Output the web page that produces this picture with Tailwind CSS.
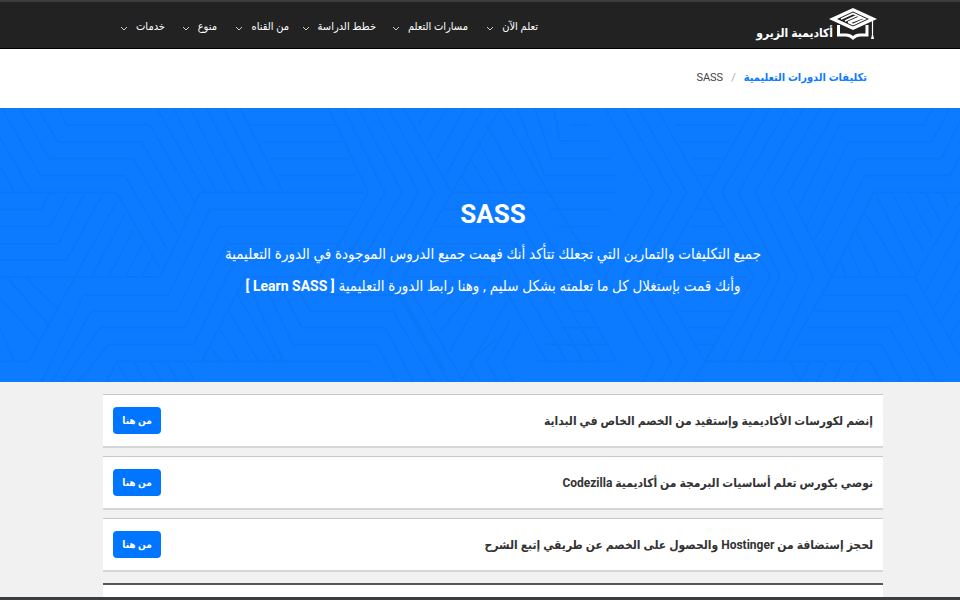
<!DOCTYPE html>
<html lang="ar" dir="rtl">
<head>
<meta charset="utf-8">
<meta name="viewport" content="width=device-width, initial-scale=1">
<title>SASS - أكاديمية الزيرو</title>
<script src="https://cdn.jsdelivr.net/npm/@tailwindcss/browser@4"></script>
</head>
<body class="flex min-h-screen flex-col bg-[#f1f1f1] font-[Roboto,'DejaVu_Sans_Condensed','DejaVu_Sans',sans-serif] text-[#333]">
<header class="border-t-2 border-b border-t-[#3b3d3e] border-b-black bg-[#222] pl-[26px]">
  <div class="mx-auto flex h-[46px] max-w-[780px] items-center justify-between">
    <a href="#" class="ms-[6px] flex items-center text-white" aria-label="أكاديمية الزيرو">
      <svg class="mb-[2px] h-8 w-12" viewBox="0 0 48 32" fill="none" aria-hidden="true">
        <path d="M24 0 48 11 24 22 0 11Z" fill="#fff"/>
        <path d="M24 3.500 40 11 24 18.500 8 11Z" fill="#222"/>
        <path d="M12 11 24 5.500 36 11 24 16.500 19 14.200M16 13 28 7.500M19 14.200 32 8.500M20 15 33 10" stroke="#fff" stroke-width="1.600"/>
        <path d="M9.500 17V27H17Q21 27 24 30Q27 27 31 27H38V17" stroke="#fff" stroke-width="3"/>
        <path d="M43.500 12V26" stroke="#fff" stroke-width="1.200"/>
        <path d="M43.500 24 42 31H45Z" fill="#fff"/>
      </svg>
      <span class="-ms-1 whitespace-nowrap pt-4 text-xs font-bold">أكاديمية الزيرو</span>
    </a>
    <nav class="me-[18px] grid grid-cols-[70px_92px_87px_72px_52px_44px] pt-1 text-[11px] text-white">
      <a href="#" class="flex items-center gap-2 whitespace-nowrap">تعلم الآن<svg class="mt-1 h-2 w-2 shrink-0" viewBox="0 0 8 8" fill="none" stroke="#ccc" aria-hidden="true"><path d="M1 2 4 5 7 2"/></svg></a>
      <a href="#" class="flex items-center gap-2 whitespace-nowrap">مسارات التعلم<svg class="mt-1 h-2 w-2 shrink-0" viewBox="0 0 8 8" fill="none" stroke="#ccc" aria-hidden="true"><path d="M1 2 4 5 7 2"/></svg></a>
      <a href="#" class="flex items-center gap-2 whitespace-nowrap">خطط الدراسة<svg class="mt-1 h-2 w-2 shrink-0" viewBox="0 0 8 8" fill="none" stroke="#ccc" aria-hidden="true"><path d="M1 2 4 5 7 2"/></svg></a>
      <a href="#" class="flex items-center gap-2 whitespace-nowrap">من القناه<svg class="mt-1 h-2 w-2 shrink-0" viewBox="0 0 8 8" fill="none" stroke="#ccc" aria-hidden="true"><path d="M1 2 4 5 7 2"/></svg></a>
      <a href="#" class="flex items-center gap-2 whitespace-nowrap">منوع<svg class="mt-1 h-2 w-2 shrink-0" viewBox="0 0 8 8" fill="none" stroke="#ccc" aria-hidden="true"><path d="M1 2 4 5 7 2"/></svg></a>
      <a href="#" class="flex items-center gap-2 whitespace-nowrap">خدمات<svg class="mt-1 h-2 w-2 shrink-0" viewBox="0 0 8 8" fill="none" stroke="#ccc" aria-hidden="true"><path d="M1 2 4 5 7 2"/></svg></a>
    </nav>
  </div>
</header>
<nav aria-label="مسار التنقل" class="bg-white pl-[26px]">
  <ol class="mx-auto flex h-[59px] max-w-[780px] items-center gap-2 px-4 text-[11px]">
    <li><a href="#" class="font-bold text-[#0d7bff]">تكليفات الدورات التعليمية</a></li>
    <li class="text-[#aaa]" aria-hidden="true">/</li>
    <li class="text-[#444]">SASS</li>
  </ol>
</nav>
<main class="flex grow flex-col">
  <section class="relative overflow-hidden bg-[#0d7bff] pl-[26px] text-white">
    <svg class="absolute inset-0 h-full w-full" viewBox="0 9 2880 822" preserveAspectRatio="xMidYMin slice" fill="none" stroke="#0c76f6" stroke-width="5" aria-hidden="true">
      <path d="M175 9 200 60H450L585 293M113 9 172 111H425L557 340M60 9 147 160H400L531 386M5 9 122 212H375L503 434M0 262H350L480 490M0 97 95 262M0 184 45 262M470 9 615 262M520 9 650 262M570 9 700 262M620 9 750 262M670 9 800 262M720 9 850 262M755 60H1010M785 111H1025M810 160H1050M835 212H1070"/>
      <path d="M0 313H125L150 262M0 365H150L205 262M0 415H175L255 262M0 465H200L310 262M0 516H480L600 262H1095M225 516 350 290M275 516 375 325M325 516 400 375M375 516 430 415M425 516 455 460M225 516 85 770H0M75 516 170 610M20 516 150 665M0 580 120 710M0 670 45 770"/>
      <path d="M125 830 250 570H505L630 313H1065M145 850 275 618H530L655 365H1040M175 850 300 668H555L680 415H1015M220 850 325 718H580L705 465H990M310 850 350 770H605L735 516H965M710 565 830 770M685 615 775 770M655 668 720 770M630 720 665 770M875 516 930 618H1180L1300 830M825 516 905 668H1155L1240 830M780 516 880 718H1130L1190 830M735 516 850 770H1110M350 770 385 830M400 770 435 830M450 770 485 830M500 770 535 830M550 770 585 830M605 770H850"/>
      <path d="M985 9 1105 262 960 516M1030 9 1155 262 1010 516M1075 9 1205 262 1060 516M1120 9 1255 262 1110 516M1165 9 1305 262 1160 516M1210 9 1355 262 1210 516M1255 60 1285 9M1280 111 1340 9M1310 160 1395 9M1335 212 1450 9M1355 262 1500 9M1385 212 1415 262M1410 160 1470 262M1435 111 1520 262M1460 60 1575 262M1355 262H1850M1500 9 1645 262 1800 516M1550 9 1635 212H1850M1605 9 1655 160H1830M1660 9 1680 108H1800M1710 60H1770"/>
      <path d="M1330 313H1595L1850 770M1305 365H1570L1800 770M1275 415H1550L1750 770M1250 465H1520L1700 770M1225 516H1495L1640 770M1650 313H1830M1675 365H1800M1705 415H1780M965 570H1205L1335 800M1165 516 1345 830M1210 516 1390 830M1335 570 1365 516M1300 630 1400 516M1320 680 1450 516M1350 740 1475 516M1520 590 1385 830M1490 700 1410 770 1440 830M1530 650 1460 770 1495 830M1560 680 1510 770 1540 830M1610 770H1850M1635 718H1825M1680 668H1800M1710 618H1770"/>
      <path transform="translate(280)" d="M1534 9 1680 262 1534 516M1589 9 1735 262 1589 516M1634 9 1780 262 1634 516M1689 9 1835 262 1689 516M1745 60H1930M1760 111H1910M1790 160H1885M1815 212H1860M1805 313H1860M1790 365H1890M1760 415H1915M1730 465H1940M1705 516H1960M1760 618H1925M1785 668H1900M1810 718H1870M1981 9 1835 262 1981 516 1835 770M2031 9 1885 262 2031 516 1885 770M2081 9 1935 262 2060 516 1935 770M2131 9 1985 262 2110 516 1985 770M2181 9 2035 262 2160 516 2040 770M2231 9 2085 262 2215 516 2070 770M1534 516 1680 770 1650 830M1589 516 1735 770 1700 830M1634 516 1780 770 1745 830M1689 516 1835 770 1800 830"/>
      <path transform="translate(1920)" d="M880 9 850 60H600L475 310M930 9 875 111H625L500 360M960 50 905 160H650L525 405M960 150 930 212H675L550 455M960 262H700L575 516M670 315 790 516M645 370 720 516M620 415 665 516M600 465 620 516M705 262 825 500M755 262 850 440M805 262 875 395M855 262 900 350M905 262 925 305M575 516H825L960 755M550 570H800L925 790M525 618H775L890 830M500 668H750L840 830M475 718H725L785 830M195 770H690L725 830M825 516 960 290M855 560 960 370M880 610 960 470M900 655 960 555M925 705 960 640M450 770 480 830 510 770M530 830 560 770M580 830 610 770M630 830 660 770"/>
    </svg>
    <div class="relative mx-auto flex min-h-[274px] max-w-[780px] flex-col items-center pt-[86px] text-center">
      <h1 class="text-[26px] leading-10 font-bold">SASS</h1>
      <p class="mt-1 text-[15px] leading-8">جميع التكليفات والتمارين التي تجعلك تتأكد أنك فهمت جميع الدروس الموجودة في الدورة التعليمية<br>وأنك قمت بإستغلال كل ما تعلمته بشكل سليم , وهنا رابط الدورة التعليمية <a href="#" class="text-sm font-bold">[ Learn SASS ]</a></p>
    </div>
  </section>
  <div class="flex grow flex-col pt-3 pl-[26px]">
    <div class="mx-auto flex w-full max-w-[780px] grow flex-col">
      <ul class="flex flex-col gap-2 text-xs font-bold">
        <li class="flex items-center justify-between border-t border-b-2 border-t-[#c8c8c8] border-b-[#d6d6d6] bg-white px-[10px] py-3"><span>إنضم لكورسات الأكاديمية وإستفيد من الخصم الخاص في البداية</span><a href="#" class="flex h-[27px] w-12 items-center justify-center rounded bg-[#0075ff] text-[10px] text-white">من هنا</a></li>
        <li class="flex items-center justify-between border-t border-b-2 border-t-[#c8c8c8] border-b-[#d6d6d6] bg-white px-[10px] py-3"><span>نوصي بكورس تعلم أساسيات البرمجة من أكاديمية Codezilla</span><a href="#" class="flex h-[27px] w-12 items-center justify-center rounded bg-[#0075ff] text-[10px] text-white">من هنا</a></li>
        <li class="flex items-center justify-between border-t border-b-2 border-t-[#c8c8c8] border-b-[#d6d6d6] bg-white px-[10px] py-3"><span>لحجز إستضافة من Hostinger والحصول على الخصم عن طريقي إتبع الشرح</span><a href="#" class="flex h-[27px] w-12 items-center justify-center rounded bg-[#0075ff] text-[10px] text-white">من هنا</a></li>
      </ul>
      <div class="mt-[11px] grow border-t-2 border-[#555] bg-white"></div>
    </div>
  </div>
</main>
<footer class="h-[3px] bg-[#3b3d3e]"></footer>
</body>
</html>
